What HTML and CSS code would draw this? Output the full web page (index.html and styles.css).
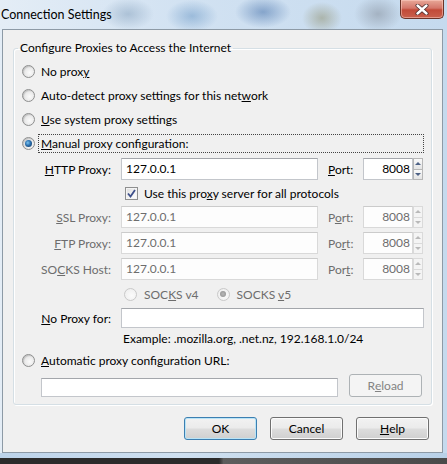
FILE: index.html
```html
<!DOCTYPE html>
<html>
<head>
<meta charset="utf-8">
<link rel="stylesheet" href="styles.css">
</head>
<body>
<div class="window">
  <div class="titlebar">
    <span class="title">Connection Settings</span>
    <div class="close">
      <svg width="14" height="11" viewBox="0 0 14 11">
        <path d="M2.5 1.5 L11.5 9.5 M11.5 1.5 L2.5 9.5" stroke="#4a2a2a" stroke-width="4" stroke-linecap="round"/>
        <path d="M2.5 1.5 L11.5 9.5 M11.5 1.5 L2.5 9.5" stroke="#ffffff" stroke-width="2.4" stroke-linecap="round"/>
      </svg>
    </div>
  </div>
  <div class="client">
    <fieldset class="group">
      <legend>Configure Proxies to Access the Internet</legend>
      <div class="opt"><span class="radio"></span><span class="lbl">No prox<u>y</u></span></div>
      <div class="opt"><span class="radio"></span><span class="lbl">Auto-detect proxy settings for this net<u>w</u>ork</span></div>
      <div class="opt"><span class="radio"></span><span class="lbl"><u>U</u>se system proxy settings</span></div>
      <div class="opt"><span class="radio checked"></span><span class="lbl focus"><u>M</u>anual proxy configuration:</span></div>

      <div class="proxies">
        <span class="plabel"><u>H</u>TTP Proxy:</span>
        <div class="input">127.0.0.1</div>
        <span class="portlbl"><u>P</u>ort:</span>
        <div class="port"><div class="portin">8008</div><div class="spin"><span class="up"></span><span class="down"></span></div></div>

        <div class="checkrow"><span class="check"><svg width="9" height="9" viewBox="0 0 9 9"><path d="M1 4.5 L3.5 7.5 L8 1" fill="none" stroke="#3d4f8a" stroke-width="1.8"/></svg></span><span>Use this pro<u>x</u>y server for all protocols</span></div>

        <span class="plabel dis"><u>S</u>SL Proxy:</span>
        <div class="input dis">127.0.0.1</div>
        <span class="portlbl dis">P<u>o</u>rt:</span>
        <div class="port dis"><div class="portin">8008</div><div class="spin"><span class="up"></span><span class="down"></span></div></div>

        <span class="plabel dis"><u>F</u>TP Proxy:</span>
        <div class="input dis">127.0.0.1</div>
        <span class="portlbl dis">Po<u>r</u>t:</span>
        <div class="port dis"><div class="portin">8008</div><div class="spin"><span class="up"></span><span class="down"></span></div></div>

        <span class="plabel dis">SO<u>C</u>KS Host:</span>
        <div class="input dis">127.0.0.1</div>
        <span class="portlbl dis">Por<u>t</u>:</span>
        <div class="port dis"><div class="portin">8008</div><div class="spin"><span class="up"></span><span class="down"></span></div></div>
      </div>

      <div class="socksrow">
        <span class="radio dis"></span><span class="slbl">SOC<u>K</u>S v4</span>
        <span class="radio dis checked v5"></span><span class="slbl">SOCKS <u>v</u>5</span>
      </div>

      <div class="noproxy">
        <span class="plabel"><u>N</u>o Proxy for:</span>
        <div class="input wide"></div>
      </div>
      <div class="example">Example: .mozilla.org, .net.nz, 192.168.1.0/24</div>

      <div class="opt auto"><span class="radio"></span><span class="lbl"><u>A</u>utomatic proxy configuration URL:</span></div>
      <div class="urlrow">
        <div class="input url"></div>
        <div class="btn disabled">R<u>e</u>load</div>
      </div>
    </fieldset>
    <div class="buttons">
      <div class="btn default">OK</div>
      <div class="btn">Cancel</div>
      <div class="btn"><u>H</u>elp</div>
    </div>
  </div>
  <div class="bottomframe"></div>
  <div class="taskbar"></div>
</div>
</body>
</html>
```
FILE: styles.css
```css
* { box-sizing: border-box; }
html, body { margin: 0; padding: 0; }
body {
  font-family: Lato, "Open Sans", sans-serif;
  font-size: 12px;
  color: #000;
  background: #333;
}
u { text-decoration: underline; text-underline-offset: 1px; }

.window {
  width: 447px;
  height: 464px;
  display: flex;
  flex-direction: column;
  background:
    radial-gradient(ellipse 26px 16px at 128px 14px, rgba(120,150,180,.45), transparent),
    radial-gradient(ellipse 26px 16px at 192px 16px, rgba(90,140,190,.45), transparent),
    radial-gradient(ellipse 28px 16px at 263px 12px, rgba(60,105,165,.5), transparent),
    radial-gradient(ellipse 20px 16px at 322px 18px, rgba(140,140,105,.5), transparent),
    radial-gradient(ellipse 24px 18px at 378px 14px, rgba(120,128,140,.45), transparent),
    linear-gradient(90deg, #e4edf6 0%, #d2e2f2 40%, #c5daee 100%);
}

.titlebar {
  height: 29px;
  flex: none;
  display: flex;
  justify-content: space-between;
  align-items: flex-start;
}
.title {
  padding-left: 1px;
  line-height: 29px;
  font-size: 12.5px;
  color: #000;
}
.close {
  width: 44px;
  height: 19px;
  margin-right: 3px;
  border: 1px solid #6b3328;
  border-top: none;
  border-radius: 0 0 5px 5px;
  background: linear-gradient(#e8a898 0%, #d4766a 45%, #c24a38 55%, #c9604c 100%);
  box-shadow: inset 0 0 0 1px rgba(255,210,200,.5);
  display: flex;
  align-items: center;
  justify-content: center;
}

.client {
  height: 424px;
  flex: none;
  margin: 0 4px 0 2px;
  border: 1px solid #8d9aa6;
  background: #f0f0f0;
  display: flex;
  flex-direction: column;
}

.group {
  margin: 10px 10px 0 10px;
  padding: 3px 0 7px 0;
  border: 1px solid #d5dfe5;
  border-radius: 3px;
  box-shadow: inset 1px 1px 0 #fff, 1px 1px 0 #fff;
  min-width: 0;
}
.group legend {
  margin-left: 4px;
  padding: 0 2px;
  line-height: 16px;
}

.opt {
  height: 24px;
  display: flex;
  align-items: center;
  padding-left: 8px;
}
.opt .lbl {
  margin-left: 3px;
  padding: 0 2px;
  border: 1px solid transparent;
  line-height: 17px;
}
.opt .lbl.focus {
  flex: 1;
  margin-right: 7px;
  border: 1px dotted #444;
}

.radio {
  width: 13px;
  height: 13px;
  flex: none;
  border-radius: 50%;
  border: 1px solid #8e8f8f;
  background: radial-gradient(circle at 60% 60%, #fbfbfb 0%, #e8e8e8 55%, #c8c8c8 100%);
  box-shadow: inset 1px 1px 1px rgba(0,0,0,.12);
  display: flex;
  align-items: center;
  justify-content: center;
}
.radio.checked::after {
  content: "";
  width: 7px;
  height: 7px;
  border-radius: 50%;
  background: radial-gradient(circle at 40% 40%, #7cc4f0 0%, #2a6fae 45%, #0f2e52 100%);
}
.radio.dis {
  border-color: #c9c9c9;
  background: radial-gradient(circle at 60% 60%, #fbfbfb 0%, #f0f0f0 70%, #e0e0e0 100%);
  box-shadow: none;
}
.radio.dis.checked::after {
  background: radial-gradient(circle, #b8b8b8 0%, #9a9a9a 70%, #bdbdbd 100%);
  width: 6px;
  height: 6px;
}

.proxies {
  display: grid;
  grid-template-columns: 97px 197px 25px 60px;
  grid-template-rows: 22px 18px 22px 22px 22px;
  column-gap: 10px;
  row-gap: 4px;
  margin-top: 3px;
  align-items: center;
}
.plabel { text-align: right; }
.dis { color: #6d6d6d; }

.input {
  height: 22px;
  background: #fff;
  border: 1px solid #c3c6cb;
  border-top-color: #a3a6ab;
  padding-left: 4px;
  line-height: 20px;
}
.input.dis {
  border-color: #d9d9d9;
  border-top-color: #cbcbcb;
  background: #fdfdfd;
}

.port {
  display: flex;
  height: 22px;
}
.portin {
  width: 50px;
  height: 22px;
  background: #fff;
  border: 1px solid #c3c6cb;
  border-top-color: #a3a6ab;
  text-align: right;
  padding-right: 2px;
  line-height: 20px;
}
.port.dis .portin {
  border-color: #d9d9d9;
  border-top-color: #cbcbcb;
  background: #fdfdfd;
}
.spin {
  width: 10px;
  display: flex;
  flex-direction: column;
}
.spin span {
  flex: 1;
  border: 1px solid #b7b7b7;
  background: linear-gradient(#fafafa, #e4e4e4);
  display: flex;
  align-items: center;
  justify-content: center;
}
.spin span + span { border-top: none; }
.spin .up::after {
  content: "";
  border-left: 3px solid transparent;
  border-right: 3px solid transparent;
  border-bottom: 3px solid #4d6185;
}
.spin .down::after {
  content: "";
  border-left: 3px solid transparent;
  border-right: 3px solid transparent;
  border-top: 3px solid #4d6185;
}
.port.dis .spin span { border-color: #dadada; background: #f4f4f4; }
.port.dis .spin .up::after { border-bottom-color: #b9b9b9; }
.port.dis .spin .down::after { border-top-color: #b9b9b9; }

.checkrow {
  grid-column: 2 / span 3;
  display: flex;
  align-items: center;
  padding-left: 4px;
}
.check {
  width: 13px;
  height: 13px;
  flex: none;
  border: 1px solid #8e8f8f;
  background: linear-gradient(135deg, #dcdcdc 0%, #f4f4f4 60%, #fff 100%);
  box-shadow: inset 0 0 0 1px #f4f4f4;
  display: flex;
  align-items: center;
  justify-content: center;
  margin-right: 6px;
}

.socksrow {
  height: 28px;
  display: flex;
  align-items: center;
  padding-left: 110px;
  color: #6d6d6d;
}
.socksrow .slbl { margin-left: 7px; }
.socksrow .v5 { margin-left: 18px; }

.noproxy {
  display: flex;
  align-items: center;
  column-gap: 10px;
}
.noproxy .plabel { width: 97px; flex: none; }
.input.wide { width: 303px; height: 20px; }

.example {
  height: 22px;
  line-height: 22px;
  padding-left: 109px;
}

.opt.auto { height: 20px; }

.urlrow {
  display: flex;
  align-items: flex-end;
  margin-top: 4px;
  padding-left: 27px;
}
.input.url { width: 297px; height: 19px; }
.urlrow .btn { margin-left: 11px; }

.btn {
  width: 73px;
  height: 23px;
  border: 1px solid #707070;
  border-radius: 3px;
  background: linear-gradient(#f2f2f2 0%, #ebebeb 48%, #dddddd 52%, #cfcfcf 100%);
  box-shadow: inset 0 0 0 1px #fbfbfb;
  display: flex;
  align-items: center;
  justify-content: center;
}
.btn.disabled {
  border-color: #adb2b5;
  background: #f4f4f4;
  box-shadow: none;
  color: #838383;
}
.btn.default {
  border-color: #3c7fb1;
  box-shadow: inset 0 0 0 1px #b9e4f7;
}

.buttons {
  display: flex;
  justify-content: flex-end;
  gap: 13px;
  margin: 12px 13px 0 0;
}

.bottomframe {
  height: 5px;
  flex: none;
  background: linear-gradient(90deg, #bcd3ea, #cfe0f0 40%, #b9d1e8);
}
.taskbar {
  height: 6px;
  flex: none;
  background: linear-gradient(90deg, #2b2b2b 0%, #2b2b2b 49%, #5d5d5d 50%, #4a4a4a 100%);
}
```
